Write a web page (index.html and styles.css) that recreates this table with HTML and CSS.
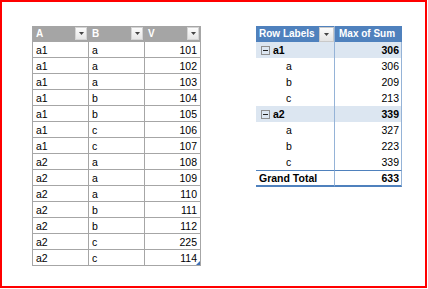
FILE: index.html
```html
<!DOCTYPE html>
<html>
<head>
<meta charset="utf-8">
<link rel="stylesheet" href="styles.css">
</head>
<body>
<div class="frame">
  <div class="sheet">
    <div class="tbl">
      <div class="th"><span>A</span><span class="dd"><svg width="5" height="3" viewBox="0 0 5 3"><path d="M0 0H5L2.5 3Z" fill="#444"/></svg></span></div>
      <div class="th"><span>B</span><span class="dd"><svg width="5" height="3" viewBox="0 0 5 3"><path d="M0 0H5L2.5 3Z" fill="#444"/></svg></span></div>
      <div class="th"><span>V</span><span class="dd"><svg width="5" height="3" viewBox="0 0 5 3"><path d="M0 0H5L2.5 3Z" fill="#444"/></svg></span></div>
      <div class="td">a1</div><div class="td">a</div><div class="td num">101</div>
      <div class="td">a1</div><div class="td">a</div><div class="td num">102</div>
      <div class="td">a1</div><div class="td">a</div><div class="td num">103</div>
      <div class="td">a1</div><div class="td">b</div><div class="td num">104</div>
      <div class="td">a1</div><div class="td">b</div><div class="td num">105</div>
      <div class="td">a1</div><div class="td">c</div><div class="td num">106</div>
      <div class="td">a1</div><div class="td">c</div><div class="td num">107</div>
      <div class="td">a2</div><div class="td">a</div><div class="td num">108</div>
      <div class="td">a2</div><div class="td">a</div><div class="td num">109</div>
      <div class="td">a2</div><div class="td">a</div><div class="td num">110</div>
      <div class="td">a2</div><div class="td">b</div><div class="td num">111</div>
      <div class="td">a2</div><div class="td">b</div><div class="td num">112</div>
      <div class="td">a2</div><div class="td">c</div><div class="td num">225</div>
      <div class="td">a2</div><div class="td">c</div><div class="td num last">114<span class="handle"></span></div>
    </div>

    <div class="pivot">
      <div class="ph ph1"><span>Row Labels</span><span class="pdd"><svg width="5" height="3" viewBox="0 0 5 3"><path d="M0 0H5L2.5 3Z" fill="#444"/></svg></span></div>
      <div class="ph ph2">Max of Sum</div>

      <div class="pl grp"><span class="box"></span>a1</div><div class="pv grp">306</div>
      <div class="pl sub">a</div><div class="pv">306</div>
      <div class="pl sub">b</div><div class="pv">209</div>
      <div class="pl sub">c</div><div class="pv">213</div>
      <div class="pl grp"><span class="box"></span>a2</div><div class="pv grp">339</div>
      <div class="pl sub">a</div><div class="pv">327</div>
      <div class="pl sub">b</div><div class="pv">223</div>
      <div class="pl sub">c</div><div class="pv">339</div>
      <div class="pl gt">Grand Total</div><div class="pv gt">633</div>
    </div>
  </div>
</div>
</body>
</html>
```

FILE: styles.css
```css
html, body {
  margin: 0;
  padding: 0;
  background: #ffffff;
}

body {
  font-family: "Liberation Sans", Arial, sans-serif;
  font-size: 10.5px;
  color: #000000;
}

.frame {
  box-sizing: border-box;
  width: 427px;
  height: 288px;
  border: 2px solid #ff0000;
}

.sheet {
  display: flex;
  align-items: flex-start;
  gap: 55px;
  padding: 24px 0 0 30px;
}

/* left table */
.tbl {
  display: grid;
  grid-template-columns: repeat(3, 55px);
  grid-auto-rows: 15px;
  gap: 1px;
  background: #a6a6a6;
  border: 1px solid #a6a6a6;
  border-top: 0;
}

.th {
  background: #a5a5a5;
  color: #ffffff;
  font-weight: bold;
  font-size: 10px;
  display: flex;
  align-items: center;
  justify-content: space-between;
  padding: 0 1px 0 3px;
  line-height: 15px;
}

.dd {
  box-sizing: border-box;
  width: 12px;
  height: 13px;
  background: linear-gradient(#fcfcfc, #e6e6e6);
  border: 1px solid #d4d4d4;
  display: flex;
  align-items: center;
  justify-content: center;
}

.td {
  background: #ffffff;
  padding: 1px 3px 0;
  line-height: 14px;
  white-space: nowrap;
}

.num {
  text-align: right;
}

.last {
  position: relative;
}

.handle {
  position: absolute;
  right: 0;
  bottom: 0;
  width: 0;
  height: 0;
  border-left: 4px solid transparent;
  border-bottom: 4px solid #3e6fb4;
}

/* pivot table */
.pivot {
  display: grid;
  grid-template-columns: 79px 67px;
  grid-template-rows: repeat(9, 16px) 17px;
}

.pivot > div {
  box-sizing: border-box;
  border-right: 1px solid #95b3d7;
  line-height: 16px;
  white-space: nowrap;
}

.ph {
  background: #4f81bd;
  color: #ffffff;
  font-weight: bold;
  font-size: 10px;
}

.pivot > .ph1 {
  display: flex;
  align-items: center;
  justify-content: space-between;
  padding-left: 3px;
  border-right-color: #95b3d7;
}

.pivot > .ph2 {
  padding-left: 4px;
  border-right-color: #4f81bd;
}

.pdd {
  box-sizing: border-box;
  width: 15px;
  height: 15px;
  background: linear-gradient(#fcfcfc, #e4e4e4);
  border: 1px solid #c9c9c9;
  display: flex;
  align-items: center;
  justify-content: center;
}

.pl {
  padding-left: 30px;
}

.pv {
  text-align: right;
  padding-right: 2px;
}

.grp {
  background: #dce6f1;
  font-weight: bold;
}

.pivot > .pl.grp {
  display: flex;
  align-items: center;
  padding-left: 5px;
}

.box {
  box-sizing: border-box;
  width: 9px;
  height: 9px;
  border: 1px solid #8f8f8f;
  margin-right: 3px;
  position: relative;
  flex: none;
}

.box::after {
  content: "";
  position: absolute;
  left: 1px;
  top: 3px;
  width: 5px;
  height: 1px;
  background: #222222;
}

.pivot > .gt {
  font-weight: bold;
  border-top: 1px solid #4f81bd;
  border-bottom: 2px solid #4f81bd;
  line-height: 14px;
}

.pivot > .pl.gt {
  padding-left: 3px;
}
```
